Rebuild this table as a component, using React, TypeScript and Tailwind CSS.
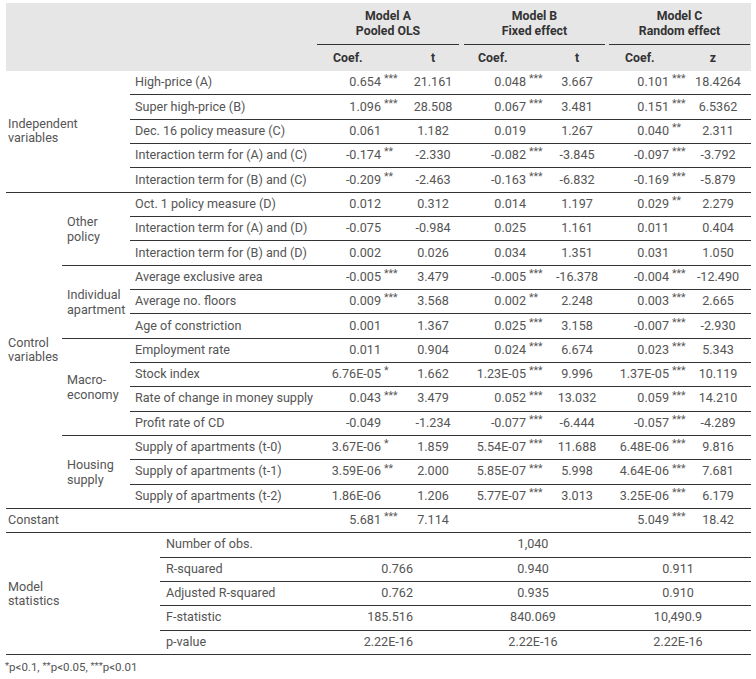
import React from "react";

type Cell = [string, string];
interface Row {
  label: string;
  a: Cell;
  at: string;
  b: Cell;
  bt: string;
  c: Cell;
  ct: string;
}

const r = (
  label: string,
  a: string,
  as: string,
  at: string,
  b: string,
  bs: string,
  bt: string,
  c: string,
  cs: string,
  ct: string
): Row => ({ label, a: [a, as], at, b: [b, bs], bt, c: [c, cs], ct });

const independent: Row[] = [
  r("High-price (A)", "0.654", "***", "21.161", "0.048", "***", "3.667", "0.101", "***", "18.4264"),
  r("Super high-price (B)", "1.096", "***", "28.508", "0.067", "***", "3.481", "0.151", "***", "6.5362"),
  r("Dec. 16 policy measure (C)", "0.061", "", "1.182", "0.019", "", "1.267", "0.040", "**", "2.311"),
  r("Interaction term for (A) and (C)", "-0.174", "**", "-2.330", "-0.082", "***", "-3.845", "-0.097", "***", "-3.792"),
  r("Interaction term for (B) and (C)", "-0.209", "**", "-2.463", "-0.163", "***", "-6.832", "-0.169", "***", "-5.879"),
];

const control: { name: string[]; rows: Row[] }[] = [
  {
    name: ["Other", "policy"],
    rows: [
      r("Oct. 1 policy measure (D)", "0.012", "", "0.312", "0.014", "", "1.197", "0.029", "**", "2.279"),
      r("Interaction term for (A) and (D)", "-0.075", "", "-0.984", "0.025", "", "1.161", "0.011", "", "0.404"),
      r("Interaction term for (B) and (D)", "0.002", "", "0.026", "0.034", "", "1.351", "0.031", "", "1.050"),
    ],
  },
  {
    name: ["Individual", "apartment"],
    rows: [
      r("Average exclusive area", "-0.005", "***", "3.479", "-0.005", "***", "-16.378", "-0.004", "***", "-12.490"),
      r("Average no. floors", "0.009", "***", "3.568", "0.002", "**", "2.248", "0.003", "***", "2.665"),
      r("Age of constriction", "0.001", "", "1.367", "0.025", "***", "3.158", "-0.007", "***", "-2.930"),
    ],
  },
  {
    name: ["Macro-", "economy"],
    rows: [
      r("Employment rate", "0.011", "", "0.904", "0.024", "***", "6.674", "0.023", "***", "5.343"),
      r("Stock index", "6.76E-05", "*", "1.662", "1.23E-05", "***", "9.996", "1.37E-05", "***", "10.119"),
      r("Rate of change in money supply", "0.043", "***", "3.479", "0.052", "***", "13.032", "0.059", "***", "14.210"),
      r("Profit rate of CD", "-0.049", "", "-1.234", "-0.077", "***", "-6.444", "-0.057", "***", "-4.289"),
    ],
  },
  {
    name: ["Housing", "supply"],
    rows: [
      r("Supply of apartments (t-0)", "3.67E-06", "*", "1.859", "5.54E-07", "***", "11.688", "6.48E-06", "***", "9.816"),
      r("Supply of apartments (t-1)", "3.59E-06", "**", "2.000", "5.85E-07", "***", "5.998", "4.64E-06", "***", "7.681"),
      r("Supply of apartments (t-2)", "1.86E-06", "", "1.206", "5.77E-07", "***", "3.013", "3.25E-06", "***", "6.179"),
    ],
  },
];

const stats = [
  ["Number of obs.", "", "1,040", ""],
  ["R-squared", "0.766", "0.940", "0.911"],
  ["Adjusted R-squared", "0.762", "0.935", "0.910"],
  ["F-statistic", "185.516", "840.069", "10,490.9"],
  ["p-value", "2.22E-16", "2.22E-16", "2.22E-16"],
];

const Stars = ({ s, w }: { s: string; w: string }) => (
  <span className={`${w} shrink-0 pl-[3px] text-left text-[10.5px] leading-none -translate-y-[3px]`}>{s}</span>
);

const Coef = ({ v, w, starW }: { v: Cell; w: string; starW: string }) => (
  <div className={`${w} flex items-center justify-end`}>
    <span>{v[0]}</span>
    <Stars s={v[1]} w={starW} />
  </div>
);

const DataRow = ({ row }: { row: Row }) => (
  <div className="flex h-[24.33px] items-center border-b border-[#333]">
    <div className="w-[187px] pl-[5px]">{row.label}</div>
    <Coef v={row.a} w="w-[88px]" starW="w-[24px]" />
    <div className="w-[56px] text-center">{row.at}</div>
    <Coef v={row.b} w="w-[88px]" starW="w-[23px]" />
    <div className="w-[56px] text-center">{row.bt}</div>
    <Coef v={row.c} w="w-[84px]" starW="w-[20px]" />
    <div className="w-[62px] pr-[4px] text-center">{row.ct}</div>
  </div>
);

const ModelHead = ({ title, sub, line, coefPad, last, lastPad }: { title: string; sub: string; line: string; coefPad: string; last: string; lastPad?: string }) => (
  <div className="flex flex-col">
    <div className={`flex h-[42px] flex-col items-center justify-center border-b border-[#333] leading-[15px] ${line}`}>
      <span>{title}</span>
      <span>{sub}</span>
    </div>
    <div className="flex h-[26px] items-center">
      <div className={`w-[88px] ${coefPad}`}>Coef.</div>
      <div className={`flex-1 text-center ${lastPad ?? ""}`}>{last}</div>
    </div>
  </div>
);

export default function App() {
  return (
    <div className="min-h-[679px] w-[756px] bg-white pt-[3px] pl-[6px] font-['Roboto',_sans-serif] text-[12.6px] text-[#555]">
      <div className="w-[745px]">
        {/* header */}
        <div className="flex h-[68px] bg-[#e6e6e7] text-[12.3px] font-bold text-[#333]">
          <div className="w-[311px]" />
          <div className="w-[144px]">
            <ModelHead title="Model A" sub="Pooled OLS" line="mr-[2px]" coefPad="pl-[16px]" last="t" />
          </div>
          <div className="w-[144px]">
            <ModelHead title="Model B" sub="Fixed effect" line="ml-[3px]" coefPad="pl-[17px]" last="t" />
          </div>
          <div className="w-[146px]">
            <ModelHead title="Model C" sub="Random effect" line="ml-[4px] mr-[1px]" coefPad="pl-[20px]" last="z" lastPad="pr-[18px]" />
          </div>
        </div>

        {/* independent variables */}
        <div className="flex">
          <div className="flex w-[124px] items-center border-b border-[#333] pl-[2px] leading-[14px]">
            <span>
              Independent
              <br />
              variables
            </span>
          </div>
          <div className="flex flex-col">
            {independent.map((row) => (
              <DataRow key={row.label} row={row} />
            ))}
          </div>
        </div>

        {/* control variables */}
        <div className="flex">
          <div className="flex w-[56px] items-center border-b border-[#333] pl-[2px] leading-[14px]">
            <span>
              Control
              <br />
              variables
            </span>
          </div>
          <div className="flex flex-col">
            {control.map((g) => (
              <div key={g.name.join("")} className="flex">
                <div className="flex w-[68px] items-center border-b border-[#333] pl-[5px] leading-[15px]">
                  <span>
                    {g.name[0]}
                    <br />
                    {g.name[1]}
                  </span>
                </div>
                <div className="flex flex-col">
                  {g.rows.map((row) => (
                    <DataRow key={row.label} row={row} />
                  ))}
                </div>
              </div>
            ))}
          </div>
        </div>

        {/* constant */}
        <div className="flex h-[24.33px] items-center border-b border-[#333]">
          <div className="w-[311px] pl-[2px]">Constant</div>
          <Coef v={["5.681", "***"]} w="w-[88px]" starW="w-[24px]" />
          <div className="w-[56px] text-center">7.114</div>
          <div className="w-[144px]" />
          <Coef v={["5.049", "***"]} w="w-[84px]" starW="w-[20px]" />
          <div className="w-[62px] pr-[4px] text-center">18.42</div>
        </div>

        {/* model statistics */}
        <div className="flex">
          <div className="flex w-[154px] items-center border-b border-[#333] pl-[2px] leading-[14px]">
            <span>
              Model
              <br />
              statistics
            </span>
          </div>
          <div className="flex flex-col">
            {stats.map((s) => (
              <div key={s[0]} className="flex h-[24.33px] items-center border-b border-[#333]">
                <div className="w-[157px] pl-[6px]">{s[0]}</div>
                <div className="w-[144px] pr-[48px] text-right">{s[1]}</div>
                <div className="w-[144px] text-center">{s[2]}</div>
                <div className="w-[146px] text-center">{s[3]}</div>
              </div>
            ))}
          </div>
        </div>
      </div>

      <p className="mt-[4px] -ml-[1px] text-[11.5px] text-[#555]">
        <span className="text-[9.5px] align-top">*</span>p&lt;0.1,{" "}
        <span className="text-[9.5px] align-top">**</span>p&lt;0.05,{" "}
        <span className="text-[9.5px] align-top">***</span>p&lt;0.01
      </p>
    </div>
  );
}
